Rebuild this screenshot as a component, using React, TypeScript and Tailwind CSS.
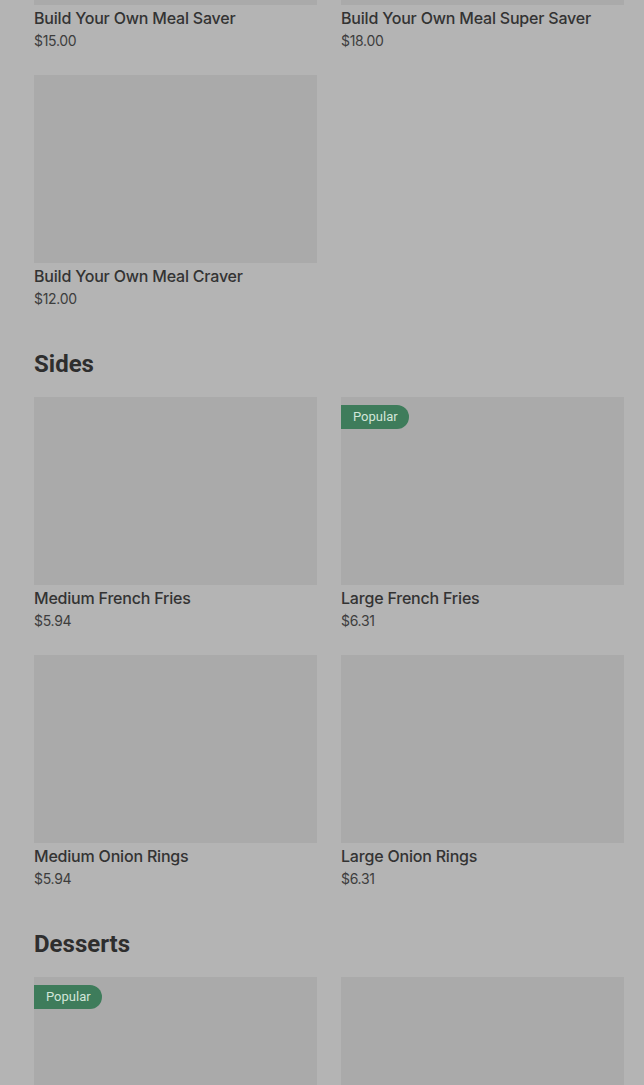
import React from "react";

type Item = { name?: string; price?: string; popular?: boolean };

function Card({ item }: { item: Item }) {
  return (
    <div className="flex flex-col">
      <div className="relative h-[188px] bg-[#aaaaaa]">
        {item.popular && (
          <span className="absolute left-0 top-[8px] h-[24px] pl-[12px] pr-[11px] rounded-r-full bg-[#3e7c5b] text-[#d2e6d9] text-[13px] leading-[24px] font-[Roboto,sans-serif]">
            Popular
          </span>
        )}
      </div>
      {item.name && (
        <>
          <div className="mt-[1px] text-[16px] leading-[24px] font-medium tracking-[-0.2px] text-[#333333]">
            {item.name}
          </div>
          <div className="mt-[1px] text-[14px] leading-[20px] tracking-[-0.3px] text-[#3d3d3d]">{item.price}</div>
        </>
      )}
    </div>
  );
}

function Grid({ items }: { items: Item[] }) {
  return (
    <div className="grid grid-cols-2 gap-x-[24px] gap-y-[24px]">
      {items.map((it, i) => (
        <Card key={i} item={it} />
      ))}
    </div>
  );
}

function Heading({ children }: { children: React.ReactNode }) {
  return (
    <h2 className="mt-[39px] mb-[17px] text-[24px] leading-[32px] font-bold text-[#2e2e2e] font-[Roboto,sans-serif]">
      {children}
    </h2>
  );
}

export default function App() {
  return (
    <div
      className="h-[1085px] overflow-hidden bg-[#b4b4b4] pl-[34px] pr-[20px]"
      style={{ fontFamily: "Inter, 'Liberation Sans', sans-serif" }}
    >
      <div className="-mt-[183px]">
        <Grid
          items={[
            { name: "Build Your Own Meal Saver", price: "$15.00" },
            { name: "Build Your Own Meal Super Saver", price: "$18.00" },
            { name: "Build Your Own Meal Craver", price: "$12.00" },
          ]}
        />
        <Heading>Sides</Heading>
        <Grid
          items={[
            { name: "Medium French Fries", price: "$5.94" },
            { name: "Large French Fries", price: "$6.31", popular: true },
            { name: "Medium Onion Rings", price: "$5.94" },
            { name: "Large Onion Rings", price: "$6.31" },
          ]}
        />
        <Heading>Desserts</Heading>
        <Grid items={[{ popular: true }, {}]} />
      </div>
    </div>
  );
}
